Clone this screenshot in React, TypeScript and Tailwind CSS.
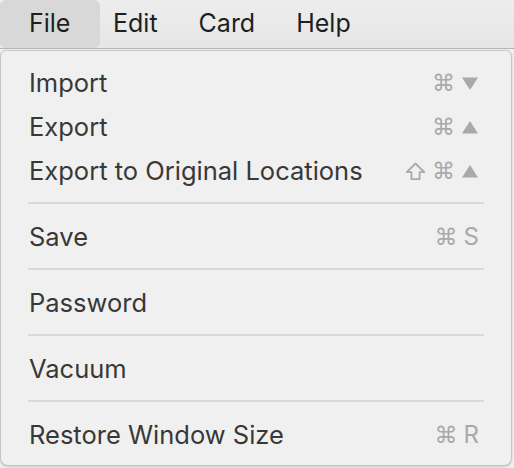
import React from 'react';

type Key = 'cmd' | 'shift' | 'down' | 'up' | string;

interface MenuItem {
  label: string;
  keys?: Key[];
}

// groups are split by separators
const groups: MenuItem[][] = [
  [
    { label: 'Import', keys: ['cmd', 'down'] },
    { label: 'Export', keys: ['cmd', 'up'] },
    { label: 'Export to Original Locations', keys: ['shift', 'cmd', 'up'] },
  ],
  [{ label: 'Save', keys: ['cmd', 'S'] }],
  [{ label: 'Password' }],
  [{ label: 'Vacuum' }],
  [{ label: 'Restore Window Size', keys: ['cmd', 'R'] }],
];

function KeyGlyph({ k }: { k: Key }) {
  if (k === 'cmd') {
    return <span className="text-[23px] leading-none font-['DejaVu_Sans',sans-serif]">⌘</span>;
  }
  if (k === 'down') {
    return (
      <svg width="18" height="15" viewBox="0 0 18 15">
        <path d="M1 1.5h16L9 14z" fill="currentColor" />
      </svg>
    );
  }
  if (k === 'up') {
    return (
      <svg width="18" height="15" viewBox="0 0 18 15">
        <path d="M1 13.5h16L9 1z" fill="currentColor" />
      </svg>
    );
  }
  if (k === 'shift') {
    return (
      <svg width="21" height="19" viewBox="0 0 21 19">
        <path
          d="M10.5 1.5L1.8 10.2h4.6v7h8.2v-7h4.6z"
          fill="none"
          stroke="currentColor"
          strokeWidth="1.8"
          strokeLinejoin="round"
        />
      </svg>
    );
  }
  return <span className="text-[24px] leading-none">{k}</span>;
}

export default function App() {
  return (
    <div className="w-[514px] h-[468px] bg-[#efefef] font-['Inter','Liberation_Sans',sans-serif] overflow-hidden">
      <div className="h-[49px] flex items-stretch bg-gradient-to-b from-[#ededed] to-[#e6e6e6] border-b border-[#b4b4b4] text-[25px] text-[#1e1e1e]">
        <div className="w-[100px] pl-[29px] flex items-center rounded-md bg-[#d8d8d8]">File</div>
        <div className="ml-[13px] flex items-center gap-[41px]">
          <span>Edit</span>
          <span>Card</span>
          <span>Help</span>
        </div>
      </div>
      <div className="mt-[1px] w-[512px] h-[416px] bg-[#f0f0f0] border border-[#c4c4c4] rounded-b-lg rounded-t-md pt-[10px] pb-[8px] shadow-[0_1px_2px_rgba(0,0,0,0.15)]">
        {groups.map((g, gi) => (
          <div key={gi}>
            {gi > 0 && <div className="mx-[27px] mt-[9px] mb-[11px] h-[2px] bg-[#d9d9d9]" />}
            {g.map((item) => (
              <div
                key={item.label}
                className="h-[44px] pl-[28px] pr-[32px] flex items-center justify-between text-[25.5px] text-[#383838]"
              >
                <span>{item.label}</span>
                {item.keys && (
                  <span className="flex items-center gap-[6px] text-[#a9a9a9]">
                    {item.keys.map((k, ki) => (
                      <KeyGlyph key={ki} k={k} />
                    ))}
                  </span>
                )}
              </div>
            ))}
          </div>
        ))}
      </div>
    </div>
  );
}
